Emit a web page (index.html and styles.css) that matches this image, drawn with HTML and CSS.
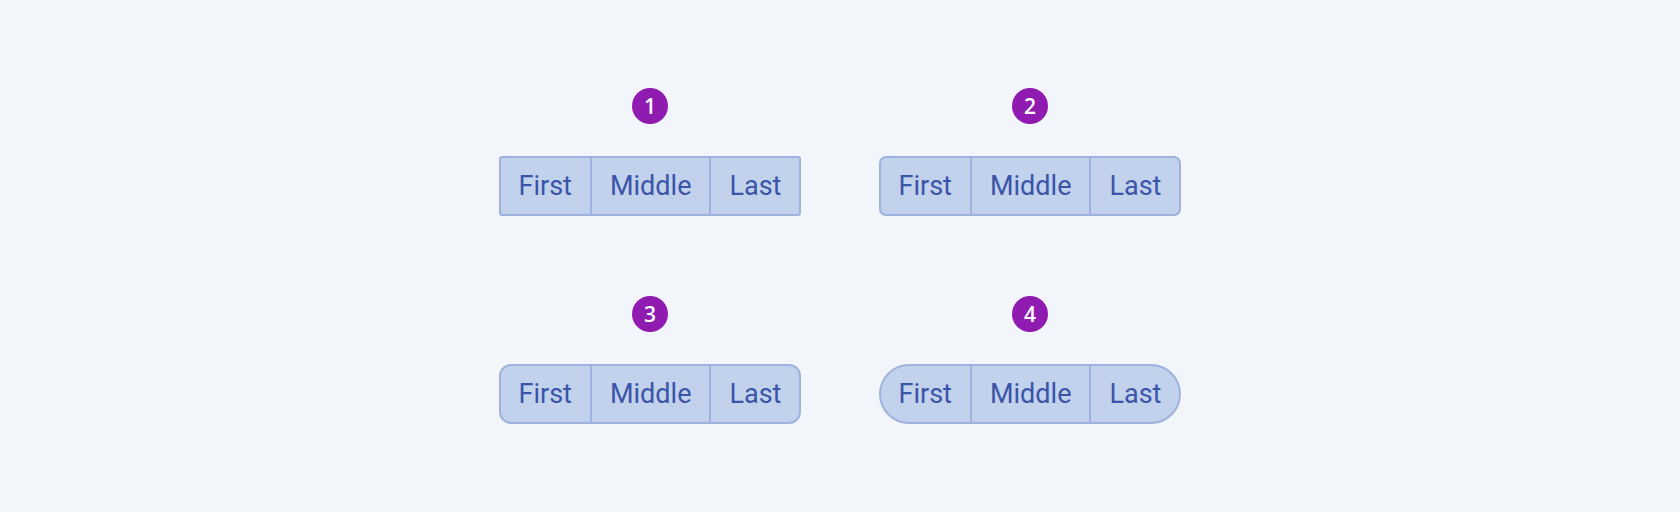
FILE: index.html
```html
<!DOCTYPE html>
<html>
<head>
<meta charset="utf-8">
<link rel="stylesheet" href="styles.css">
</head>
<body>
<main class="grid">
  <section class="cell">
    <div class="badge">1</div>
    <div class="group r1"><span class="seg">First</span><span class="seg">Middle</span><span class="seg">Last</span></div>
  </section>
  <section class="cell">
    <div class="badge">2</div>
    <div class="group r2"><span class="seg">First</span><span class="seg">Middle</span><span class="seg">Last</span></div>
  </section>
  <section class="cell">
    <div class="badge">3</div>
    <div class="group r3"><span class="seg">First</span><span class="seg">Middle</span><span class="seg">Last</span></div>
  </section>
  <section class="cell">
    <div class="badge">4</div>
    <div class="group r4"><span class="seg">First</span><span class="seg">Middle</span><span class="seg">Last</span></div>
  </section>
</main>
</body>
</html>
```
FILE: styles.css
```css
html, body {
  margin: 0;
  padding: 0;
  background: #f2f5fa;
}
body {
  width: 1680px;
  height: 512px;
  display: flex;
  align-items: center;
  justify-content: center;
}
.grid {
  display: grid;
  grid-template-columns: 300px 300px;
  column-gap: 80px;
  row-gap: 80px;
}
.cell {
  display: flex;
  flex-direction: column;
  align-items: center;
  gap: 32px;
}
.badge {
  width: 36px;
  height: 36px;
  border-radius: 50%;
  background: #8f1bb0;
  color: #ffffff;
  font-family: "Open Sans", "Noto Sans", sans-serif;
  font-weight: 600;
  font-size: 21px;
  line-height: 36px;
  text-align: center;
}
.group {
  display: flex;
  height: 60px;
  box-sizing: border-box;
  border: 2px solid #9db3dd;
  background: #c2d1ec;
  overflow: hidden;
}
.seg {
  display: flex;
  align-items: center;
  padding: 0 18px;
  font-family: Roboto, "Liberation Sans", sans-serif;
  font-size: 27px;
  color: #3a55a8;
}
.seg + .seg {
  border-left: 2px solid #9db3dd;
}
.r1 { border-radius: 3px; }
.r2 { border-radius: 7px; }
.r3 { border-radius: 12px; }
.r4 { border-radius: 30px; }
```
